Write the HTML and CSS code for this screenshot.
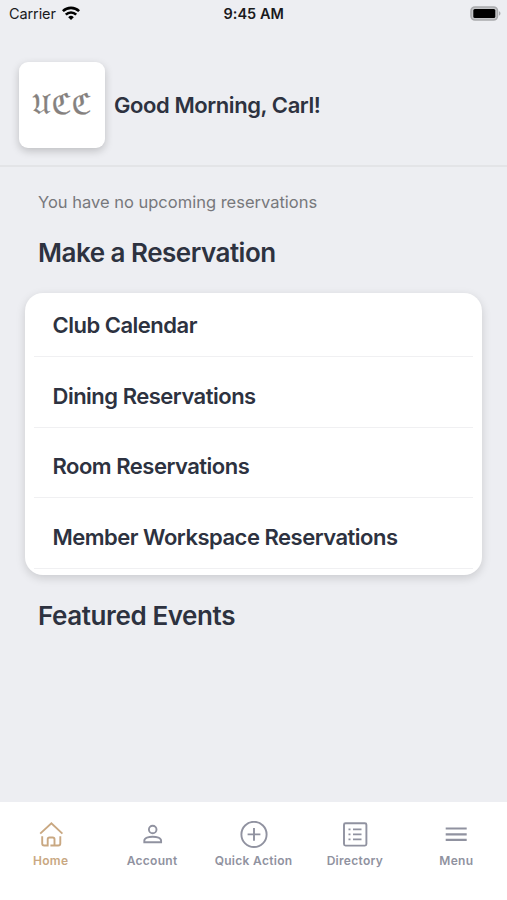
FILE: index.html
```html
<!DOCTYPE html>
<html lang="en">
<head>
    <meta charset="UTF-8">
    <meta name="viewport" content="width=device-width, initial-scale=1.0">
    <title>Home</title>
    <link rel="stylesheet" href="styles.css">
</head>
<body>

<div class="status-bar">
    <div class="carrier">
        <span>Carrier</span>
        <svg width="18" height="14" viewBox="0 0 18 14" fill="none" stroke="#000" stroke-width="2.6">
            <path d="M0.9 5.2a11.5 11.5 0 0 1 16.2 0"/>
            <path d="M3.8 8.6a7.4 7.4 0 0 1 10.4 0"/>
            <path d="M9 14L6.2 11.2a4 4 0 0 1 5.6 0z" fill="#000" stroke="none"/>
        </svg>
    </div>
    <div class="time">9:45 AM</div>
    <svg class="battery" width="31" height="15" viewBox="0 0 31 15">
        <rect x="1" y="1" width="26.5" height="13" rx="4" fill="#c4c5c8" stroke="#a9aaad" stroke-width="1.6"/>
        <rect x="3.3" y="3" width="22" height="9" rx="1.5" fill="#000"/>
        <path d="M29 5.3v4.4q1.5-.6 1.5-2.2t-1.5-2.2z" fill="#a9aaad"/>
    </svg>
</div>

<header class="greeting">
    <div class="logo"><span>𝔘ℭℭ</span></div>
    <h1>Good Morning, Carl!</h1>
</header>

<main>
    <p class="upcoming">You have no upcoming reservations</p>
    <h2>Make a Reservation</h2>
    <ul class="card">
        <li>Club Calendar</li>
        <li>Dining Reservations</li>
        <li>Room Reservations</li>
        <li>Member Workspace Reservations</li>
    </ul>
    <h2 class="featured">Featured Events</h2>
</main>

<nav class="tab-bar">
    <a class="tab active">
        <svg width="28" height="28" viewBox="0 0 28 28">
            <path d="M3.2 12.6L14.4 2.2 25.4 12.6M5.2 15.2v7.3q0 2 2 2h3.5v-6.2q0-1.8 1.8-1.8h3.2q1.8 0 1.8 1.8v6.2M13.4 24.5h7.9q2 0 2-2v-7.3"/>
        </svg>
        <span>Home</span>
    </a>
    <a class="tab">
        <svg width="28" height="28" viewBox="0 0 28 28">
            <circle cx="14.7" cy="8.5" r="3.8"/>
            <path d="M6.3 21.2v-1.5c0-2.7 4.4-4 8.4-4s8.4 1.3 8.4 4v1.5z"/>
        </svg>
        <span>Account</span>
    </a>
    <a class="tab">
        <svg width="28" height="28" viewBox="0 0 28 28">
            <circle cx="14" cy="13.4" r="12.6"/>
            <path d="M14 7v12.8M7.6 13.4h12.8"/>
        </svg>
        <span>Quick Action</span>
    </a>
    <a class="tab">
        <svg width="28" height="28" viewBox="0 0 28 28">
            <rect x="3" y="2.2" width="22.4" height="22.4" rx="1.5"/>
            <path d="M7.5 8.4h2M12 8.4h8.5M7.5 13.4h2M12 13.4h8.5M7.5 18.4h2M12 18.4h8.5"/>
        </svg>
        <span>Directory</span>
    </a>
    <a class="tab">
        <svg width="28" height="28" viewBox="0 0 28 28">
            <path d="M3.7 7.5h21M3.7 13.3h21M3.7 18.9h21" stroke-width="2.2"/>
        </svg>
        <span>Menu</span>
    </a>
</nav>

</body>
</html>
```
FILE: styles.css
```css
* {
    box-sizing: border-box;
}

body {
    font-family: Inter, "Liberation Sans", sans-serif;
    background-color: #edeef2;
    color: #2d3240;
    margin: 0;
    height: 900px;
    display: flex;
    flex-direction: column;
    overflow: hidden;
}

.status-bar {
    display: flex;
    align-items: center;
    height: 27px;
    padding: 0 6px 0 9px;
    color: #1a1a1c;
    font-size: 14.5px;
}

.carrier {
    flex: 1;
    display: flex;
    align-items: center;
    gap: 6px;
    letter-spacing: -0.1px;
}

.carrier svg {
    margin-top: -2px;
}

.time {
    font-weight: 600;
    letter-spacing: 0.05px;
}

.battery {
    margin-left: 186px;
    margin-top: -1px;
}

.greeting {
    display: flex;
    align-items: center;
    height: 140px;
    padding: 17px 19px 0;
    border-bottom: 2px solid #e3e4e7;
}

.logo {
    width: 86px;
    height: 86px;
    display: flex;
    align-items: center;
    justify-content: center;
    background-color: #fff;
    border-radius: 9px;
    box-shadow: 0 3px 8px rgba(0, 0, 0, 0.2);
    font-family: "DejaVu Sans", "DejaVu Serif", serif;
    font-size: 28.5px;
    line-height: 34px;
    color: #85817e;
    -webkit-text-stroke: 0.3px #85817e;
}

h1 {
    margin: 0 0 0 9px;
    font-size: 22px;
    font-weight: 560;
    line-height: 28px;
    letter-spacing: -0.42px;
}

main {
    flex: 1;
    padding: 0 25px;
}

.upcoming {
    margin: 23px 13px 0;
    font-size: 16.5px;
    line-height: 24px;
    color: #77787c;
}

h2 {
    margin: 22px 13px 0;
    font-size: 26px;
    font-weight: 560;
    line-height: 34px;
    letter-spacing: -0.5px;
}

.card {
    list-style: none;
    height: 282px;
    margin: 23px 0 0;
    padding: 0 9px;
    background-color: #fff;
    border-radius: 18px;
    box-shadow: 0 3px 10px rgba(0, 0, 0, 0.15);
}

.card li {
    height: 70.6px;
    padding: 24.5px 18.5px 0;
    border-bottom: 1px solid #f0f0f2;
    font-size: 22px;
    font-weight: 560;
    line-height: 28px;
    letter-spacing: -0.5px;
}

.card li:first-child {
    height: 64px;
    padding-top: 18px;
}

.featured {
    margin-top: 24px;
    letter-spacing: -0.4px;
}

.tab-bar {
    display: flex;
    height: 98px;
    padding-top: 19px;
    background-color: #fff;
}

.tab {
    flex: 1;
    display: flex;
    flex-direction: column;
    align-items: center;
    color: #9092a0;
    font-size: 12px;
    font-weight: 600;
    line-height: 16px;
    letter-spacing: 0.3px;
}

.tab svg {
    fill: none;
    stroke: currentColor;
    stroke-width: 1.9;
    margin-bottom: 4px;
}

.active {
    color: #c9a882;
}
```
